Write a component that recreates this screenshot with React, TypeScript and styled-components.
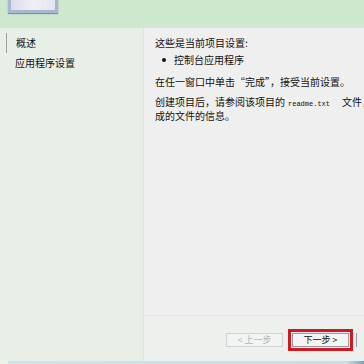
import React from "react";
import styled, { createGlobalStyle } from "styled-components";

const Global = createGlobalStyle`
  html, body { margin: 0; padding: 0; background: #eef0ee; }
  body { font-family: "Noto Sans CJK SC", "Noto Sans", sans-serif; }
`;

const Frame = styled.div`
  width: 364px;
  height: 364px;
  overflow: hidden;
  display: flex;
  flex-direction: column;
  background: #eef0ee;
  font-size: 10px;
  color: #111;
`;

const Header = styled.div`
  height: 28px;
  flex: none;
  background: #cde8cd;
  display: flex;
  align-items: flex-start;
  padding-left: 8px;
`;

const Logo = styled.div`
  width: 44px;
  height: 10px;
  border: 3px solid #a9b6cf;
  border-top: none;
  background: linear-gradient(90deg, #dcdcf0, #f2eef4 50%, #e3e6f2);
  box-shadow: 0 1px 1px #7f90b0;
`;

const Body = styled.div`
  flex: 1;
  display: flex;
  min-height: 0;
`;

const Sidebar = styled.div`
  width: 143px;
  flex: none;
  background: #e8efe7;
  border-right: 1px solid #dde5dd;
  padding-top: 5px;
  display: flex;
  flex-direction: column;
`;

const NavItem = styled.div<{ $active?: boolean }>`
  height: 20px;
  line-height: 20px;
  padding-left: ${(p) => (p.$active ? "9px" : "15px")};
  margin-left: ${(p) => (p.$active ? "6px" : "0")};
  border-left: ${(p) => (p.$active ? "1px solid #9aa39a" : "none")};
  white-space: nowrap;
`;

const Main = styled.div`
  flex: 1;
  display: flex;
  flex-direction: column;
  min-width: 0;
`;

const Content = styled.div`
  height: 288px;
  flex: none;
  background: #efefef;
  border-bottom: 1px solid #e2e6e3;
  padding: 9px 0 0 11px;
  box-sizing: border-box;
  overflow: hidden;
`;

const Para = styled.div<{ $gap?: number }>`
  line-height: 12px;
  margin-top: ${(p) => p.$gap ?? 0}px;
  white-space: nowrap;
`;

const Bullet = styled.div`
  display: flex;
  align-items: center;
  margin-top: 5px;
  padding-left: 7px;
  line-height: 12px;
  &::before {
    content: "";
    width: 4px;
    height: 4px;
    border-radius: 50%;
    background: #111;
    margin-right: 8px;
  }
`;

const Mono = styled.span`
  font-family: "Liberation Mono", monospace;
  font-size: 7px;
  margin-left: 3px;
  margin-right: 12px;
`;

const Footer = styled.div`
  flex: 1;
  display: flex;
  align-items: center;
  gap: 5px;
  padding-left: 82px;
  padding-top: 2px;
`;

const Btn = styled.div<{ $disabled?: boolean }>`
  width: 57px;
  height: 14px;
  flex: none;
  box-sizing: border-box;
  border: 1px solid ${(p) => (p.$disabled ? "#cfd3d3" : "#9a9a9a")};
  background: ${(p) => (p.$disabled ? "#f2f4f4" : "#f4f4f4")};
  color: ${(p) => (p.$disabled ? "#b0b4b4" : "#111")};
  display: flex;
  align-items: center;
  justify-content: center;
  font-size: 9px;
  line-height: 12px;
  white-space: nowrap;
`;

const Highlight = styled.div`
  flex: none;
  border: 3px solid #d01822;
  padding: 1px;
  display: flex;
`;

const Edge = styled.div`
  width: 8px;
  height: 14px;
  flex: none;
  margin-left: -2px;
  border-left: 1px solid #9a9a9a;
`;

const BottomBar = styled.div`
  height: 3px;
  flex: none;
  margin-left: 8px;
  background: linear-gradient(90deg, #cde3ea, #c5dfe9 95%, #6fa6c8);
`;

export default function App() {
  return (
    <>
      <Global />
      <Frame>
        <Header>
          <Logo />
        </Header>
        <Body>
          <Sidebar>
            <NavItem $active>概述</NavItem>
            <NavItem>应用程序设置</NavItem>
          </Sidebar>
          <Main>
            <Content>
              <Para>这些是当前项目设置:</Para>
              <Bullet>控制台应用程序</Bullet>
              <Para $gap={10}>在任一窗口中单击“完成”，接受当前设置。</Para>
              <Para $gap={8}>
                创建项目后，请参阅该项目的<Mono>readme.txt</Mono>文件，以获取有关生
              </Para>
              <Para>成的文件的信息。</Para>
            </Content>
            <Footer>
              <Btn $disabled>&lt; 上一步</Btn>
              <Highlight>
                <Btn>下一步 &gt;</Btn>
              </Highlight>
              <Edge />
            </Footer>
          </Main>
        </Body>
        <BottomBar />
      </Frame>
    </>
  );
}
